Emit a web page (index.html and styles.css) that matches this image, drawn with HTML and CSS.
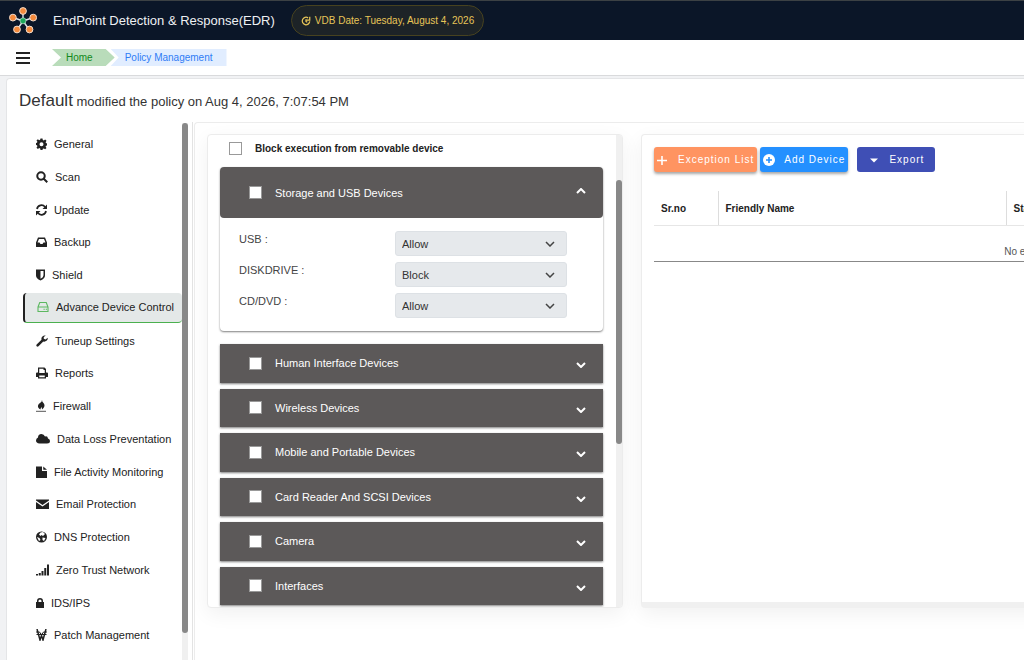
FILE: index.html
```html
<!DOCTYPE html>
<html lang="en">
  <head>
    <meta charset="UTF-8" />
    <meta name="viewport" content="width=device-width, initial-scale=1.0" />
    <title>Policy Management</title>
    <link rel="stylesheet" href="styles.css">
  </head>
  <body>
    <header class="topbar">
      <svg class="logo" viewBox="0 0 28 28">
        <g stroke="#dfe3e8" stroke-width="1.4">
          <path d="M14 14V4M14 14L4 10.500M14 14l10.500-3.500M14 14L8 23M14 14l6.500 9" />
        </g>
        <g fill="#f58a3c" stroke="#f3dccb" stroke-width="1">
          <circle cx="14" cy="4" r="3.400" />
          <circle cx="3.900" cy="10.600" r="3.400" />
          <circle cx="24.200" cy="10.600" r="3.400" />
          <circle cx="8" cy="22.500" r="3.400" />
          <circle cx="20.500" cy="22.500" r="3.400" />
        </g>
        <circle cx="14" cy="13.800" r="3" fill="#1ea85a" stroke="#cfe9da" stroke-width="0.600" />
      </svg>
      <h1>EndPoint Detection &amp; Response(EDR)</h1>
      <div class="vdb">
        <svg viewBox="0 0 24 24"><path fill="none" stroke="#e8c558" stroke-width="3" d="M17 4.500A9 9 0 1 0 21 13M21 2v8h-8M12 8v5l3 2" /></svg>
        VDB Date: Tuesday, August 4, 2026
      </div>
    </header>

    <nav class="crumbbar">
      <button class="menu" aria-label="Menu"><span></span><span></span><span></span></button>
      <div class="crumbs">
        <a class="crumb home" href="#">Home</a>
        <a class="crumb current" href="#">Policy Management</a>
      </div>
    </nav>

    <main class="card">
      <h2><span>Default</span> modified the policy on Aug 4, 2026, 7:07:54 PM</h2>
      <div class="columns">
        <aside class="sidebar">
          <ul>
            <li><a href="#"><svg width="11" viewBox="0 0 22 24"><path fill-rule="evenodd" d="M9 1h4l.6 3 2 .8L18.300 3 21 5.700l-1.700 2.600.8 2 2.900.6v3.800l-3 .6-.8 2 1.800 2.700-2.700 2.700-2.600-1.800-2 .8L13 24H9l-.6-3-2-.8-2.600 1.800L1 19.300l1.800-2.600-.8-2-2-.5v-4l2-.6.8-2L1 5 3.700 2.500l2.600 1.800 2-.8zM11 8.500a4 4 0 1 0 0 8 4 4 0 0 0 0-8z" /></svg>General</a></li>
            <li><a href="#"><svg width="12" viewBox="0 0 24 24"><path fill="none" stroke="#222" stroke-width="4" d="M10 2.500a7.500 7.500 0 1 0 0 15 7.500 7.500 0 0 0 0-15zM15.500 15.500l7 7" /></svg>Scan</a></li>
            <li><a href="#"><svg width="11" viewBox="0 0 22 24"><path fill="none" stroke="#222" stroke-width="3.500" d="M2 10a9 9 0 0 1 16-4M20 14a9 9 0 0 1-16 4" /><path d="M22 1v9h-9zM0 23v-9h9z" /></svg>Update</a></li>
            <li><a href="#"><svg width="11" viewBox="0 0 22 24"><path fill-rule="evenodd" d="M4 3h14l4 10v8q0 1-1 1H1q-1 0-1-1v-8zM6 6l-3 7h4l2 3h4l2-3h4l-3-7z" /></svg>Backup</a></li>
            <li><a href="#"><svg width="9" viewBox="0 0 18 24"><path fill-rule="evenodd" d="M0 1h18v12q0 6-9 10Q0 19 0 13zM9 4v15.500q6-3 6-7V4z" /></svg>Shield</a></li>
            <li class="active"><a href="#"><svg width="12" viewBox="0 0 24 24"><path fill="none" stroke="#5cb860" stroke-width="2.200" d="M2 12L5.500 3h13L22 12v9H2zM2 12h20" /><path fill="none" stroke="#5cb860" stroke-width="2" d="M13 16.500h2.500M17.500 16.500H20" /></svg>Advance Device Control</a></li>
            <li><a href="#"><svg width="12" viewBox="0 0 24 24"><path d="M23.500 5.500A7 7 0 0 1 14.500 13L5 22.500q-2 1.500-3.700 0-1.500-1.800 0-3.700L11 9.500A7 7 0 0 1 19.500 1L15.500 4v3.500L19 9z" /></svg>Tuneup Settings</a></li>
            <li><a href="#"><svg width="12" viewBox="0 0 24 24"><path fill-rule="evenodd" d="M4 1h13l3 3v7h2q2 0 2 2v7h-4v3H4v-3H0v-7q0-2 2-2h2zM6.500 3.500V12h11V6H15V3.500zM6.500 17v3.500h11V17z" /></svg>Reports</a></li>
            <li><a href="#"><svg width="10" viewBox="0 0 20 24"><path d="M12 0q0 4 3 6 4 5 0 10l-3 3q0-3-1-5-2 2-2 5-6-3-5-8 1-4 4-5 4-2 4-6z" /><path fill="#777" d="M0 21.500h20V24H0z" /></svg>Firewall</a></li>
            <li><a href="#"><svg width="14" viewBox="0 0 28 24"><path d="M7 21q-7-1-7-6 0-4 4-6 0-7 7-7 5 0 7 5 5-2 6 4 4 1 4 5 0 5-6 5z" /></svg>Data Loss Preventation</a></li>
            <li><a href="#"><svg width="11" viewBox="0 0 22 24"><path d="M0 1h12v9h10v14H0zM14.500 1L22 7.500h-7.500z" /></svg>File Activity Monitoring</a></li>
            <li><a href="#"><svg width="13" viewBox="0 0 26 24"><path d="M0 3h26v2L13 14 0 5zM0 8l13 9 13-9v14H0z" /></svg>Email Protection</a></li>
            <li><a href="#"><svg width="11" viewBox="0 0 22 24"><circle cx="11" cy="12" r="11" /><path fill="#fff" d="M9 3l5-1 4 4-4 4-3-2-2 2-3-3zM2 12l5 2 2 4-3 2zM13 13l6 1-3 6-3-2z" /></svg>DNS Protection</a></li>
            <li><a href="#"><svg width="13" viewBox="0 0 26 24"><path d="M0 20h4v3H0zM5.500 18h4v5h-4zM11 14h4v9h-4zM16.500 8h4v15h-4zM22 1h4v22h-4z" /></svg>Zero Trust Network</a></li>
            <li><a href="#"><svg width="8" viewBox="0 0 16 24"><path fill-rule="evenodd" d="M0 10h2V8q0-6 6-6t6 6v2h2v12H0zM5 10h6V8q0-3-3-3T5 8z" /></svg>IDS/IPS</a></li>
            <li><a href="#"><svg width="11" viewBox="0 0 22 24"><path fill="none" stroke="#222" stroke-width="3" d="M2 0l6 22 3-9 3 9 6-22" /><path fill="none" stroke="#222" stroke-width="2" d="M0 6h7l4 6 4-6h7M1 11h20" /></svg>Patch Management</a></li>
          </ul>
          <div class="scroll"><div class="thumb"></div></div>
        </aside>

        <section class="workspace">
          <div class="panel devices">
            <div class="device-list">
              <label class="block-all"><input type="checkbox" /> Block execution from removable device</label>

              <div class="group open">
                <div class="group-head">
                  <label><input type="checkbox" /> Storage and USB Devices</label>
                  <svg class="chev" viewBox="0 0 10 6"><path d="M1 5l4-4 4 4" /></svg>
                </div>
                <div class="group-body">
                  <label for="usb">USB :</label>
                  <select id="usb"><option>Allow</option><option>Block</option></select>
                  <label for="disk">DISKDRIVE :</label>
                  <select id="disk"><option>Block</option><option>Allow</option></select>
                  <label for="cd">CD/DVD :</label>
                  <select id="cd"><option>Allow</option><option>Block</option></select>
                </div>
              </div>

              <div class="group">
                <div class="group-head">
                  <label><input type="checkbox" /> Human Interface Devices</label>
                  <svg class="chev" viewBox="0 0 10 6"><path d="M1 1l4 4 4-4" /></svg>
                </div>
              </div>
              <div class="group">
                <div class="group-head">
                  <label><input type="checkbox" /> Wireless Devices</label>
                  <svg class="chev" viewBox="0 0 10 6"><path d="M1 1l4 4 4-4" /></svg>
                </div>
              </div>
              <div class="group">
                <div class="group-head">
                  <label><input type="checkbox" /> Mobile and Portable Devices</label>
                  <svg class="chev" viewBox="0 0 10 6"><path d="M1 1l4 4 4-4" /></svg>
                </div>
              </div>
              <div class="group">
                <div class="group-head">
                  <label><input type="checkbox" /> Card Reader And SCSI Devices</label>
                  <svg class="chev" viewBox="0 0 10 6"><path d="M1 1l4 4 4-4" /></svg>
                </div>
              </div>
              <div class="group">
                <div class="group-head">
                  <label><input type="checkbox" /> Camera</label>
                  <svg class="chev" viewBox="0 0 10 6"><path d="M1 1l4 4 4-4" /></svg>
                </div>
              </div>
              <div class="group">
                <div class="group-head">
                  <label><input type="checkbox" /> Interfaces</label>
                  <svg class="chev" viewBox="0 0 10 6"><path d="M1 1l4 4 4-4" /></svg>
                </div>
              </div>
            </div>
            <div class="scroll"><div class="thumb"></div></div>
          </div>

          <div class="panel exceptions">
            <div class="actions">
              <button class="btn orange"><svg viewBox="0 0 12 12"><path fill="none" stroke="#fff" stroke-width="1.600" d="M5 2v9M0 6.500h10" /></svg>Exception List</button>
              <button class="btn blue"><svg viewBox="0 0 12 12"><circle cx="6" cy="6" r="6" fill="#fff" /><path stroke="#2490ff" stroke-width="1.600" d="M6 3v6M3 6h6" /></svg>Add Device</button>
              <button class="btn indigo"><svg viewBox="0 0 12 12"><path fill="#fff" d="M2 4.500h8L6 8.500z" /></svg>Export</button>
            </div>
            <table>
              <thead>
                <tr>
                  <th class="sr">Sr.no</th>
                  <th class="name">Friendly Name</th>
                  <th>Status</th>
                </tr>
              </thead>
              <tbody>
                <tr>
                  <td colspan="3">No entries found</td>
                </tr>
              </tbody>
            </table>
          </div>
        </section>
      </div>
    </main>
  </body>
</html>
```
FILE: styles.css
```css
* {
  box-sizing: border-box;
}
body {
  margin: 0;
  min-height: 100vh;
  display: flex;
  flex-direction: column;
  overflow: hidden;
  background: #f1f2f4;
  color: #222;
  font-family: "Liberation Sans", Arial, Helvetica, sans-serif;
  font-size: 11px;
}
a {
  color: inherit;
  text-decoration: none;
}
button {
  font-family: inherit;
  border: 0;
  cursor: pointer;
}

/* header */
.topbar {
  display: flex;
  align-items: center;
  height: 40px;
  padding-left: 9px;
  background: #0b1628;
  border-top: 1px solid #3c4144;
}
.logo {
  width: 28px;
  height: 28px;
}
.topbar h1 {
  margin: 0 16px;
  color: #eef0f3;
  font-size: 13px;
  font-weight: normal;
}
.vdb {
  display: flex;
  align-items: center;
  gap: 4px;
  height: 31px;
  padding: 0 9px;
  border: 1px solid #47421f;
  border-radius: 16px;
  background: #1d2327;
  color: #e8c558;
  font-size: 10px;
}
.vdb svg {
  width: 10px;
  height: 10px;
}

/* breadcrumb */
.crumbbar {
  display: flex;
  align-items: center;
  height: 36px;
  padding-left: 16px;
  background: #fff;
  border-bottom: 1px solid #d9dadc;
}
.menu {
  display: flex;
  flex-direction: column;
  gap: 3px;
  width: 14px;
  padding: 0;
  background: none;
}
.menu span {
  height: 2px;
  background: #222;
}
.crumbs {
  display: flex;
  margin-left: 22px;
}
.crumb {
  height: 17px;
  line-height: 17px;
  font-size: 10px;
}
.home {
  padding: 0 22px 0 14px;
  background: #b9dcba;
  color: #12881a;
  clip-path: polygon(0 0, calc(100% - 9px) 0, 100% 50%, calc(100% - 9px) 100%, 0 100%, 9px 50%);
}
.current {
  margin-left: -4px;
  padding: 0 14px;
  background: #e1edff;
  color: #2f7cf6;
  clip-path: polygon(0 0, 100% 0, 100% 100%, 0 100%, 8px 50%);
}

/* policy card */
.card {
  flex: 1;
  display: flex;
  flex-direction: column;
  margin: 2px 0 0 6px;
  background: #fff;
  border: 1px solid #e4e5e7;
  border-right: 0;
  border-bottom: 0;
  border-radius: 4px 0 0 0;
}
.card h2 {
  margin: 0;
  padding: 12px 12px 0;
  color: #333;
  font-size: 13px;
  font-weight: normal;
  line-height: 20px;
}
.card h2 span {
  font-size: 17px;
}
.columns {
  flex: 1;
  display: flex;
  padding-top: 10px;
}

/* sidebar */
.sidebar {
  display: flex;
  flex: none;
  width: 186px;
  padding: 1px 0 0 16px;
  border-right: 1px solid #e3e3e3;
}
.sidebar ul {
  flex: 1;
  display: flex;
  flex-direction: column;
  height: 530px;
  margin: 0;
  padding: 6px 0 0;
  list-style: none;
}
.sidebar li {
  flex: 1;
}
.sidebar li a {
  display: flex;
  align-items: center;
  gap: 7px;
  height: 30px;
  padding-left: 13px;
}
.sidebar li svg {
  height: 12px;
  fill: #222;
}
.sidebar .active a {
  padding-left: 12px;
  background: #e4e8e8;
  border-left: 2px solid #222;
  border-bottom: 1px solid #4bb04f;
  border-radius: 4px;
}
.scroll {
  flex: none;
  width: 6px;
  background: #f0f0f0;
}
.thumb {
  border-radius: 3px;
  background: #888;
}
.sidebar .scroll {
  margin-right: 4px;
}
.sidebar .thumb {
  height: 95%;
}

/* workspace */
.workspace {
  flex: 1;
  display: flex;
  align-items: flex-start;
  gap: 18px;
  min-width: 0;
  overflow: hidden;
  margin-left: 1px;
  padding: 11px 0 0 12px;
  border: 1px solid #ececec;
  border-width: 1px 0 0 1px;
  border-radius: 4px 0 0 0;
  background: #fff;
}
.panel {
  flex: none;
  height: 474px;
  border: 1px solid #ececec;
  border-radius: 4px;
  background: #fff;
  box-shadow: 0 6px 20px rgba(0, 0, 0, 0.06);
}
.devices {
  display: flex;
  width: 416px;
  overflow: hidden;
}
.device-list {
  flex: 1;
  display: flex;
  flex-direction: column;
  gap: 6px;
  padding: 0 13px 2px 12px;
}
.devices .thumb {
  height: 56%;
  margin-top: 45px;
}
input[type="checkbox"] {
  appearance: none;
  width: 13px;
  height: 13px;
  margin: 0;
  border: 1px solid #999;
  background: #fff;
}
.block-all {
  display: flex;
  align-items: center;
  gap: 13px;
  height: 26px;
  padding-left: 9px;
  font-size: 10px;
  font-weight: bold;
}
.group {
  flex: 1;
  box-shadow: 0 1px 2px rgba(0, 0, 0, 0.5);
}
.group-head {
  display: flex;
  align-items: center;
  justify-content: space-between;
  height: 100%;
  padding: 0 17px 0 29px;
  background: #5c5959;
  color: #fff;
}
.group-head label {
  display: flex;
  align-items: center;
  gap: 13px;
}
.chev {
  width: 10px;
  height: 6px;
  margin-top: 4px;
  fill: none;
  stroke: #fff;
  stroke-width: 2;
}
.group.open {
  flex: none;
  margin-bottom: 7px;
  border-radius: 4px;
}
.open .group-head {
  height: 51px;
  border-radius: 4px;
}
.open .chev {
  margin: 0 0 4px;
}
.group-body {
  display: grid;
  grid-template-columns: 156px 172px;
  row-gap: 6px;
  padding: 13px 19px;
  color: #444;
}
.group-body label {
  line-height: 16px;
}
select {
  appearance: none;
  height: 25px;
  padding: 0 6px;
  border: 1px solid #dde1e5;
  border-radius: 3px;
  background: #e6e9ec url("data:image/svg+xml,%3Csvg xmlns='http://www.w3.org/2000/svg' viewBox='0 0 10 6'%3E%3Cpath d='M1 1l4 4 4-4' fill='none' stroke='%23444' stroke-width='1.500'/%3E%3C/svg%3E") no-repeat right 11px center / 10px 6px;
  color: #333;
  font-family: inherit;
  font-size: 11px;
}

/* exceptions */
.exceptions {
  width: 800px;
  padding: 12px;
  border-bottom: 6px solid #f0f0f0;
}
.actions {
  display: flex;
  gap: 3px;
}
.btn {
  display: flex;
  align-items: center;
  gap: 9px;
  height: 25px;
  border-radius: 3px;
  color: #fff;
  font-size: 10px;
  letter-spacing: 1px;
}
.btn svg {
  width: 12px;
  height: 12px;
}
.orange,
.blue {
  padding: 0 3px;
  box-shadow: 0 2px 3px rgba(0, 0, 0, 0.35);
}
.orange {
  background: #ff9461;
}
.blue {
  background: #2490ff;
}
.indigo {
  margin-left: 6px;
  padding: 0 11px;
  background: #3f4fb5;
}
table {
  width: 100%;
  margin-top: 19px;
  border-collapse: collapse;
  table-layout: fixed;
}
th {
  height: 34px;
  padding: 2px 7px 0;
  border-bottom: 1px solid #e6e6e6;
  border-left: 1px solid #ddd;
  font-size: 10px;
  text-align: left;
}
th.sr {
  width: 64px;
  border-left: 0;
}
th.name {
  width: 288px;
}
td {
  height: 36px;
  padding: 17px 0 0;
  border-bottom: 1px solid #888;
  color: #555;
  font-size: 10px;
  text-align: center;
}
```
